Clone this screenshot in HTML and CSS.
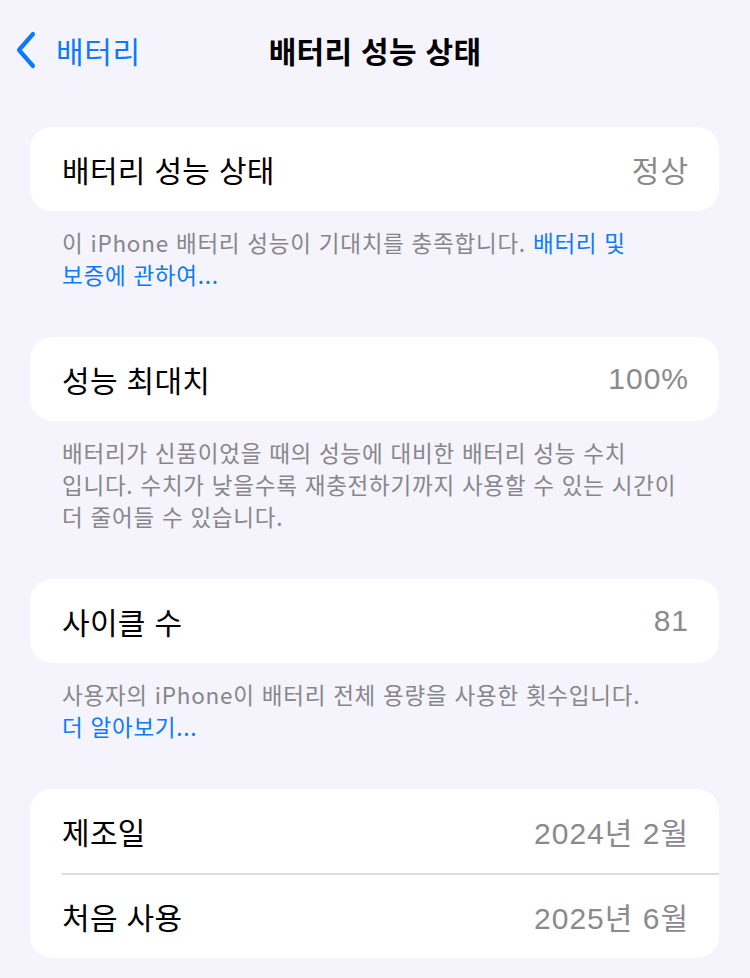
FILE: index.html
```html
<!DOCTYPE html>
<html lang="ko">
<head>
<meta charset="utf-8">
<title>배터리 성능 상태</title>
<link rel="stylesheet" href="styles.css">
</head>
<body>
<div class="page">
  <header class="nav">
    <a class="back">
      <svg class="chev" width="22" height="38" viewBox="0 0 22 38"><path d="M18 3 L4 19 L18 35" fill="none" stroke="#0a7aff" stroke-width="4.2" stroke-linecap="round" stroke-linejoin="round"/></svg>
      <span class="back-label">배터리</span>
    </a>
    <h1 class="title">배터리 성능 상태</h1>
  </header>

  <section class="group">
    <div class="card">
      <div class="row"><span class="label">배터리 성능 상태</span><span class="value">정상</span></div>
    </div>
    <p class="note">이 iPhone 배터리 성능이 기대치를 충족합니다. <span class="link">배터리 및<br>보증에 관하여...</span></p>
  </section>

  <section class="group">
    <div class="card">
      <div class="row"><span class="label">성능 최대치</span><span class="value">100%</span></div>
    </div>
    <p class="note">배터리가 신품이었을 때의 성능에 대비한 배터리 성능 수치<br>입니다. 수치가 낮을수록 재충전하기까지 사용할 수 있는 시간이<br>더 줄어들 수 있습니다.</p>
  </section>

  <section class="group">
    <div class="card">
      <div class="row"><span class="label">사이클 수</span><span class="value">81</span></div>
    </div>
    <p class="note">사용자의 iPhone이 배터리 전체 용량을 사용한 횟수입니다.<br><span class="link">더 알아보기...</span></p>
  </section>

  <section class="group">
    <div class="card">
      <div class="row"><span class="label">제조일</span><span class="value">2024년 2월</span></div>
      <div class="row divided"><span class="label">처음 사용</span><span class="value">2025년 6월</span></div>
    </div>
  </section>
</div>
</body>
</html>
```
FILE: styles.css
```css
html, body {
  margin: 0;
  padding: 0;
  background: #f5f3fb;
}
body {
  font-family: "Noto Sans CJK KR", "Noto Sans", sans-serif;
  color: #000;
  -webkit-font-smoothing: antialiased;
}
.page {
  width: 750px;
  padding: 0 31px 0 30px;
  box-sizing: border-box;
}
.nav {
  position: relative;
  height: 100px;
  display: flex;
  align-items: flex-start;
  justify-content: center;
  margin: 0 -31px 0 -30px;
}
.back {
  position: absolute;
  left: 15px;
  top: 31px;
  display: flex;
  align-items: center;
  gap: 19px;
  color: #0a7aff;
}
.chev { display: block; }
.back-label {
  font-size: 30px;
  line-height: 38px;
  letter-spacing: 0.6px;
}
.title {
  margin: 31px 0 0 0;
  font-size: 30px;
  line-height: 38px;
  font-weight: 700;
  letter-spacing: 0.3px;
}
.group {
  margin-top: 27px;
}
.group + .group {
  margin-top: 47px;
}
.card {
  background: #fff;
  border-radius: 22px;
  overflow: hidden;
}
.row {
  height: 84px;
  display: flex;
  align-items: center;
  justify-content: space-between;
  padding: 0 31px 0 32px;
  font-size: 30px;
  letter-spacing: 0.3px;
  position: relative;
}
.row.divided {
  height: 85px;
}
.row.divided::before {
  content: "";
  position: absolute;
  left: 32px;
  right: 0;
  top: 0;
  height: 1.5px;
  background: #dcdce0;
}
.label { color: #000; }
.value {
  color: #8a8a8e;
  font-family: "Liberation Sans", "Noto Sans CJK KR", sans-serif;
  letter-spacing: 1px;
  margin-right: -1px;
}
.note {
  margin: 0;
  padding: 15px 32px 0 32px;
  font-size: 22.5px;
  line-height: 32px;
  color: #86868b;
  letter-spacing: 0.75px;
}
.link { color: #0a7aff; }
```
